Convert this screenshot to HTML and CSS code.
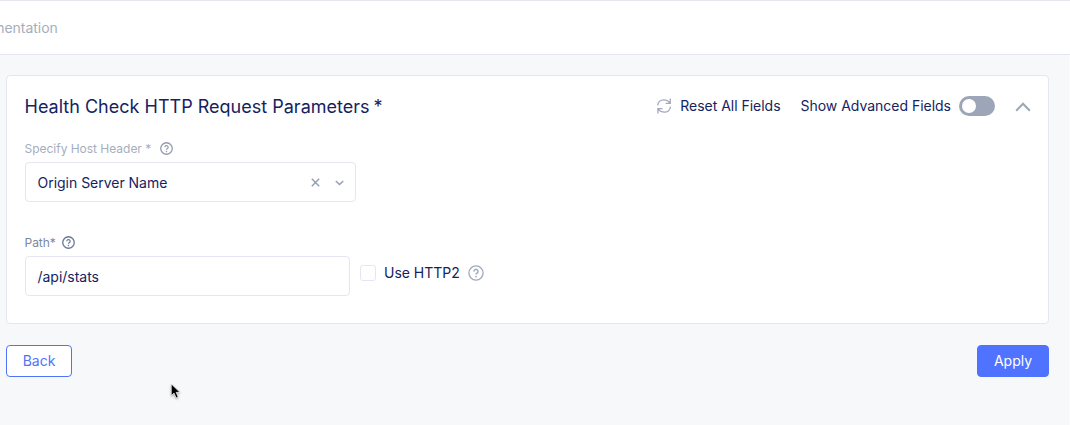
FILE: index.html
```
<!DOCTYPE html>
<html lang="en">
<head>
<meta charset="utf-8">
<title>Health Check</title>
<link rel="stylesheet" href="styles.css">
</head>
<body>
<svg class="defs" width="0" height="0">
  <symbol id="help" viewBox="0 0 16 16">
    <circle cx="8" cy="8" r="7.1" fill="none" stroke="currentColor" stroke-width="var(--ring)"/>
    <path d="M6 6.4a2 2 0 1 1 3.1 1.65C8.4 8.5 8 8.8 8 9.6" fill="none" stroke="currentColor" stroke-width="1.5"/>
    <circle cx="8" cy="11.6" r=".95" fill="currentColor"/>
  </symbol>
</svg>
<header class="topbar"><span class="crumb">Documentation</span></header>
<main class="page">
  <section class="card">
    <div class="card-head">
      <h2 class="title">Health Check HTTP Request Parameters<span class="star">*</span></h2>
      <div class="actions">
        <svg class="refresh" viewBox="0 0 16 16" fill="none" stroke="currentColor" stroke-width="1.3">
          <path d="M1.7 7.4C2 4 4.6 1.8 7.7 1.8c2.9 0 5.2 1.4 6.3 3.4M14.3.4v4.9H9.7M14.5 8.6c-.3 3.4-2.9 5.6-6 5.6-2.9 0-5.2-1.4-6.3-3.4M1.9 15.6v-4.9h4.6"/>
        </svg>
        <span class="reset">Reset All Fields</span>
        <span class="advanced">Show Advanced Fields</span>
        <span class="toggle"><span class="knob"></span></span>
        <svg class="collapse" viewBox="0 0 16 10"><path d="M1.2 8.8 8 1.8l6.8 7" fill="none" stroke="currentColor" stroke-width="2"/></svg>
      </div>
    </div>
    <div class="field host">
      <label class="label">Specify Host Header *<svg class="help small"><use href="#help"/></svg></label>
      <div class="select">
        <span class="value">Origin Server Name</span>
        <svg class="clear" viewBox="0 0 9 9"><path d="m.8.8 7.4 7.4m0-7.4L.8 8.2" fill="none" stroke="currentColor" stroke-width="1.4"/></svg>
        <svg class="caret" viewBox="0 0 9 6"><path d="m.8.9 3.7 3.6L8.2.9" fill="none" stroke="currentColor" stroke-width="1.4"/></svg>
      </div>
    </div>
    <div class="row">
      <div class="field path">
        <label class="label dark">Path*<svg class="help small"><use href="#help"/></svg></label>
        <div class="input"><span class="value">/api/stats</span></div>
      </div>
      <label class="check"><span class="box"></span><span class="check-text">Use HTTP2</span><svg class="help large"><use href="#help"/></svg></label>
    </div>
  </section>
  <footer class="buttons">
    <button class="btn back">Back</button>
    <button class="btn apply">Apply</button>
  </footer>
</main>
<svg class="cursor" viewBox="0 0 12 18"><path d="M1 1v12.4l2.9-2.7 2.2 5.1 2.2-.9-2.2-5h4z" fill="#000" stroke="#fff" stroke-width=".7"/></svg>
</body>
</html>
```
FILE: styles.css
```
* { box-sizing: border-box; }
body {
  margin: 0;
  height: 425px;
  overflow: hidden;
  background: #f7f8fa;
  color: #14235f;
  font: 14px/20px Inter, sans-serif;
  letter-spacing: -.02px;
}
svg { display: block; flex: none; }
.defs { position: absolute; }
.topbar {
  display: flex;
  align-items: center;
  height: 55px;
  border-top: 1px solid #e4e6f1;
  border-bottom: 1px solid #e4e6f1;
  background: #fff;
  overflow: hidden;
}
.crumb { margin-left: -42.5px; color: #a5aebe; }
.page { height: 370px; padding: 20px 20px 0 6px; border-right: 1px solid #fcfcfd; }
.card {
  height: 249px;
  padding: 0 18px;
  background: #fff;
  border: 1px solid #e4e6f3;
  border-radius: 4px;
}
.card-head { display: flex; align-items: center; height: 61px; }
.title { margin: 0 0 0 -.5px; font-size: 18px; font-weight: 400; letter-spacing: .01px; white-space: nowrap; }
.star { margin-left: 4px; }
.actions { display: flex; align-items: center; margin: -2px 0 0 auto; white-space: nowrap; }
.refresh { width: 16px; height: 16px; margin-right: 8px; color: #a0a9ba; }
.reset { margin-right: 20px; }
.advanced { margin-right: 8px; }
.toggle {
  display: flex;
  align-items: center;
  width: 36px;
  height: 20px;
  padding: 0 3px;
  border-radius: 10px;
  background: #9da6b8;
}
.knob { width: 14px; height: 14px; border-radius: 50%; background: #fff; }
.collapse { width: 16px; height: 10px; margin: 2px -.5px 0 19.5px; color: #9da6b8; }
.label {
  display: flex;
  align-items: center;
  height: 24px;
  margin-left: -.5px;
  color: #a5aebe;
  font-size: 12px;
}
.label.dark { color: #7d889f; }
.help { --ring: 1.6; color: #929db0; }
.help.small { width: 13px; height: 13px; margin: -1px 0 0 9px; }
.dark .help.small { color: #6c7890; margin-left: 6px; }
.select, .input {
  display: flex;
  align-items: center;
  height: 40px;
  padding: 2px 12px 0;
  border: 1px solid #e4e6f3;
  border-radius: 4px;
  background: #fff;
}
.select { width: 331px; margin-top: 1px; }
.input { width: 325px; margin-top: 1px; }
.value { margin-left: -.5px; }
.clear { width: 9px; height: 9px; margin: -2px 0 0 auto; color: #929db0; }
.caret { width: 9px; height: 6px; margin: -1px -1px 0 15px; color: #929db0; }
.row { display: flex; align-items: flex-start; margin-top: 29px; }
.check { display: flex; align-items: center; height: 20px; margin: 32px 0 0 10px; }
.box { width: 16px; height: 16px; border: 1px solid #e4e6f3; border-radius: 3px; }
.check-text { margin-left: 8px; }
.help.large { --ring: 1.3; width: 16px; height: 16px; margin-left: 8px; color: #a0a9ba; }
.buttons { display: flex; justify-content: space-between; margin-top: 21px; }
.btn {
  height: 32px;
  padding: 0;
  border: 1px solid #4f73ff;
  border-radius: 4px;
  font: inherit;
}
.back { width: 66px; background: #fff; color: #4f73ff; }
.apply { width: 72px; background: #4f73ff; color: #fff; }
.cursor {
  position: absolute;
  left: 169.5px;
  top: 383px;
  width: 12px;
  height: 17px;
  filter: drop-shadow(0 1px 1px #0005);
}
```
